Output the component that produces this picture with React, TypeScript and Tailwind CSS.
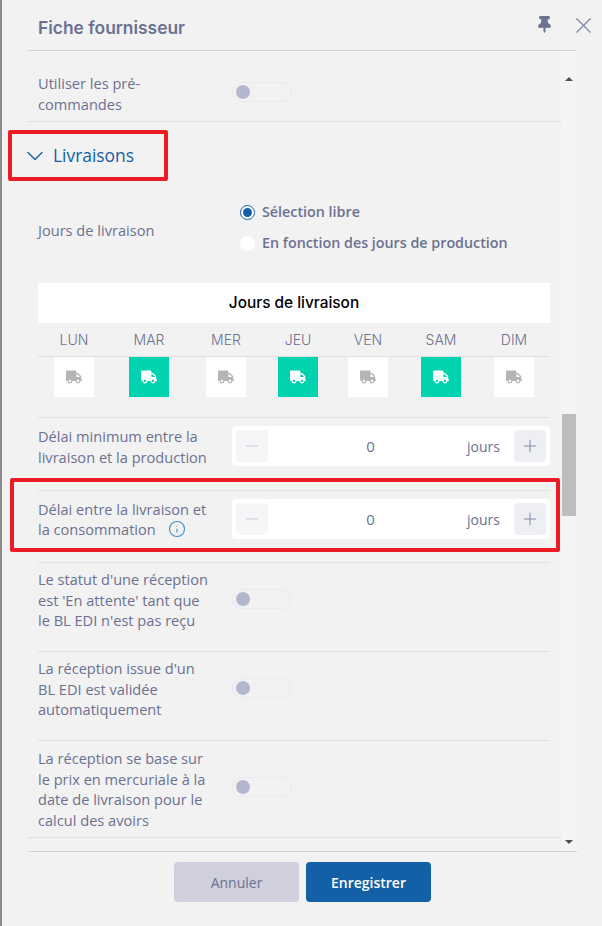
import { FaThumbtack, FaTruck } from "react-icons/fa";
import { ChevronDown, Info, Minus, Plus, X } from "lucide-react";

const days = [
  { name: "LUN", on: false, width: "w-[72px]" },
  { name: "MAR", on: true, width: "w-[78px]" },
  { name: "MER", on: false, width: "w-[76px]" },
  { name: "JEU", on: true, width: "w-[68px]" },
  { name: "VEN", on: false, width: "w-[72px]" },
  { name: "SAM", on: true, width: "w-[74px]" },
  { name: "DIM", on: false, width: "w-[72px]" },
];

function Toggle() {
  return (
    <div className="flex h-5 w-[60px] shrink-0 items-center rounded-full border border-[#e9e9f0] pl-[3px]">
      <div className="h-[14px] w-[14px] rounded-full bg-[#b3b6cf]" />
    </div>
  );
}

function Stepper() {
  return (
    <div className="flex h-10 w-[318px] shrink-0 items-center rounded bg-white px-1">
      <div className="flex h-8 w-8 items-center justify-center rounded bg-[#f6f6f8] text-[#c4c6d8]">
        <Minus size={20} strokeWidth={1.1} />
      </div>
      <div className="flex-1 pl-[6px] text-center text-[15px] text-[#6b7190]">0</div>
      <div className="mr-[14px] text-[14px] text-[#6b7190]">jours</div>
      <div className="flex h-8 w-8 items-center justify-center rounded bg-[#eeeff3] text-[#858aa8]">
        <Plus size={20} strokeWidth={1.2} />
      </div>
    </div>
  );
}

function ToggleRow({ lines }: { lines: string[] }) {
  return (
    <div className="flex h-[89px] border-b border-[#e0e0e0]">
      <div className="w-[194px] pt-[6px] text-[14.6px] leading-[20.5px] text-[#6b7190]">
        {lines.map((l) => (
          <div key={l} className="whitespace-nowrap">
            {l}
          </div>
        ))}
      </div>
      <div className="mt-[26px]">
        <Toggle />
      </div>
    </div>
  );
}

export default function App() {
  return (
    <div className="flex h-[926px] w-[602px] overflow-hidden bg-[#f2f2f3] font-['Open_Sans',sans-serif]">
      <div className="w-[2px] shrink-0 bg-[#8c8c8c]" />
      <div className="ml-[26px] flex w-[549px] flex-col">
        {/* En-tête */}
        <div className="flex h-[51px] shrink-0 items-start border-b border-[#d0d0de]">
          <div className="ml-[10px] mt-[17px] flex-1 font-['Inter',sans-serif] text-[17.4px] leading-[22px] font-semibold text-[#6b7190]">
            Fiche fournisseur
          </div>
          <FaThumbtack className="mt-[16px] mr-[17px] text-[#6b7190]" size={17} />
          <X className="mt-[12px] -mr-[20px] shrink-0 text-[#7b80a0]" size={27} strokeWidth={1} />
        </div>

        {/* Zone défilante */}
        <div className="flex h-[801px] shrink-0 border-b border-[#d0d0de]">
          <div className="w-[533px] shrink-0">
            <div className="flex h-[71px] border-b border-[#e0e0e0] pl-[10px]">
              <div className="w-[194px] pt-[22px] text-[14.6px] leading-[20.5px] text-[#6b7190]">
                <div>Utiliser les pré-</div>
                <div>commandes</div>
              </div>
              <div className="mt-[31px]">
                <Toggle />
              </div>
            </div>

            <div className="-ml-[20px] mt-[8px] flex h-[51px] w-[160px] items-center rounded-[2px] border-4 border-[#ed1c24] pl-[9px] text-[17.4px] text-[#1360a6]">
              <ChevronDown className="shrink-0" size={28} strokeWidth={1.2} />
              <span className="ml-[4px]">Livraisons</span>
            </div>

            <div className="ml-[10px] mt-[22px] flex h-[70px]">
              <div className="w-[202px] pt-[17px] text-[14.6px] leading-[20px] text-[#6b7190]">Jours de livraison</div>
              <div className="flex flex-col">
                <div className="flex h-[31px] items-start text-[14.3px] leading-[18px] font-semibold text-[#6b7190]">
                  <div className="mt-[2px] mr-[7px] flex h-[15px] w-[15px] items-center justify-center rounded-full border border-[#1360a6] bg-white">
                    <div className="h-[9px] w-[9px] rounded-full bg-[#1360a6]" />
                  </div>
                  Sélection libre
                </div>
                <div className="flex items-start whitespace-nowrap text-[14.3px] leading-[18px] font-semibold text-[#6b7190]">
                  <div className="mt-[2px] mr-[7px] h-[15px] w-[15px] rounded-full bg-white" />
                  En fonction des jours de production
                </div>
              </div>
            </div>

            {/* Tableau des jours */}
            <div className="ml-[10px] mt-[10px] w-[512px]">
              <div className="flex h-10 items-center justify-center bg-white font-['Inter',sans-serif] text-[15.4px] font-medium text-black">
                Jours de livraison
              </div>
              <div className="flex h-[34px] items-center border-b border-[#e0e0e0]">
                {days.map((d) => (
                  <div key={d.name} className={`${d.width} text-center font-['Inter',sans-serif] text-[14px] font-light text-[#6b7190]`}>
                    {d.name}
                  </div>
                ))}
              </div>
              <div className="flex">
                {days.map((d) => (
                  <div key={d.name} className={`${d.width} flex justify-center`}>
                    <div className={`flex h-10 w-10 items-center justify-center ${d.on ? "bg-[#00d3b0] text-white" : "bg-white text-[#b5b5b5]"}`}>
                      <FaTruck size={16} />
                    </div>
                  </div>
                ))}
              </div>
            </div>

            <div className="ml-[10px] mt-[20px] w-[512px]">
              <div className="flex h-[74px] border-y border-[#e0e0e0] pt-2">
                <div className="w-[194px] whitespace-nowrap text-[14.6px] leading-[21px] text-[#6b7190]">
                  <div>Délai minimum entre la</div>
                  <div>livraison et la production</div>
                </div>
                <Stepper />
              </div>
              <div className="relative flex h-[72px] border-b border-[#e0e0e0] pt-2">
                <div className="w-[194px] whitespace-nowrap text-[14.6px] leading-[20px] text-[#6b7190]">
                  <div>Délai entre la livraison et</div>
                  <div className="flex items-center">
                    la consommation
                    <Info className="ml-[12px] text-[#3d8fc4]" size={18} strokeWidth={1.5} />
                  </div>
                </div>
                <Stepper />
                {/* Cadre rouge d'annotation */}
                <div className="absolute -top-[13px] -left-[28px] h-[74px] w-[550px] rounded-[2px] border-4 border-[#ed1c24]" />
              </div>
              <ToggleRow lines={["Le statut d'une réception", "est 'En attente' tant que", "le BL EDI n'est pas reçu"]} />
              <ToggleRow lines={["La réception issue d'un", "BL EDI est validée", "automatiquement"]} />
              <div className="flex h-[96px] pt-[7px] text-[14.6px] leading-[20.5px] text-[#6b7190]">
                <div className="w-[194px] whitespace-nowrap">
                  <div>La réception se base sur</div>
                  <div>le prix en mercuriale à la</div>
                  <div>date de livraison pour le</div>
                  <div>calcul des avoirs</div>
                </div>
                <div className="mt-[29px]">
                  <Toggle />
                </div>
              </div>
            </div>
            <div className="border-b border-[#e0e0e0]" />
          </div>

          {/* Barre de défilement */}
          <div className="flex w-4 shrink-0 flex-col items-center bg-[#f4f4f5]">
            <div className="mt-[26px] h-0 w-0 border-x-[4px] border-b-[4px] border-x-transparent border-b-[#505050]" />
            <div className="mt-[333px] h-[102px] w-[14px] bg-[#bdbdbd]" />
            <div className="mt-[324px] h-0 w-0 border-x-[4px] border-t-[4px] border-x-transparent border-t-[#505050]" />
          </div>
        </div>

        {/* Boutons */}
        <div className="mt-[10px] ml-[146px] flex gap-[7px]">
          <button className="h-10 w-[125px] rounded bg-[#cfcfdd] text-[14px] text-[#6b7190]">Annuler</button>
          <button className="h-10 w-[125px] rounded bg-[#1360a6] text-[14px] font-semibold text-white">Enregistrer</button>
        </div>
      </div>
    </div>
  );
}
